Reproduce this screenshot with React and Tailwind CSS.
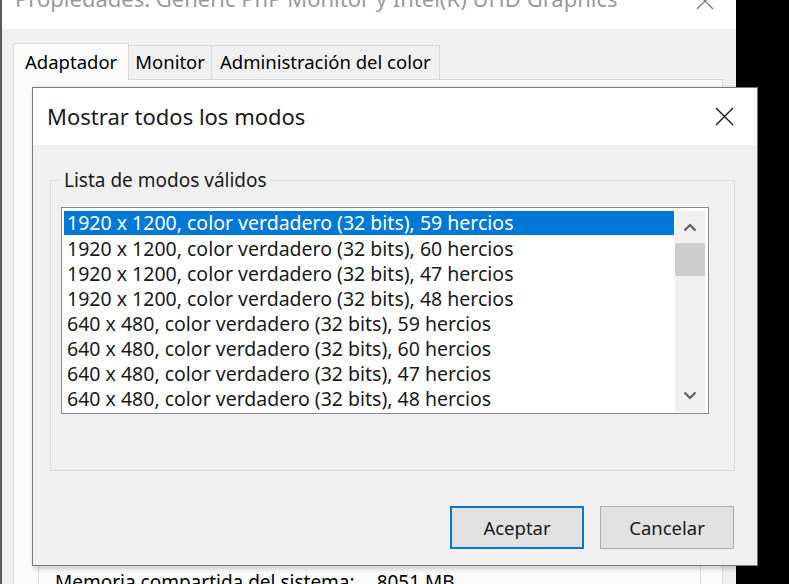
import React from "react";

const rows = [
  "1920 x 1200, color verdadero (32 bits), 59 hercios",
  "1920 x 1200, color verdadero (32 bits), 60 hercios",
  "1920 x 1200, color verdadero (32 bits), 47 hercios",
  "1920 x 1200, color verdadero (32 bits), 48 hercios",
  "640 x 480, color verdadero (32 bits), 59 hercios",
  "640 x 480, color verdadero (32 bits), 60 hercios",
  "640 x 480, color verdadero (32 bits), 47 hercios",
  "640 x 480, color verdadero (32 bits), 48 hercios",
];

function CloseX({ size = 19, color = "#1a1a1a" }) {
  return (
    <svg width={size} height={size} viewBox="0 0 19 19" fill="none">
      <path d="M1 1 L18 18 M18 1 L1 18" stroke={color} strokeWidth="1.4" />
    </svg>
  );
}

function Chevron({ up }) {
  return (
    <svg width="14" height="9" viewBox="0 0 14 9" fill="none">
      <path
        d={up ? "M1.5 7.5 L7 2 L12.5 7.5" : "M1.5 1.5 L7 7 L12.5 1.5"}
        stroke="#606060"
        strokeWidth="2.2"
      />
    </svg>
  );
}

export default function App() {
  return (
    <div
      className="w-[789px] h-[584px] bg-black overflow-hidden relative text-[#000]"
      style={{ fontFamily: '"Noto Sans", "Open Sans", sans-serif' }}
    >
      {/* background property window */}
      <div className="w-[736px] h-full bg-[#f0f0f0] border-l-[2px] border-[#5a5a5a] flex flex-col overflow-hidden">
        <div className="h-[29px] shrink-0 bg-white flex items-start justify-between pl-[13px] pr-[22px] overflow-hidden">
          <div className="text-[22px] leading-[22px] mt-[-13px] text-[#9a9a9a] whitespace-nowrap">
            Propiedades: Generic PnP Monitor y Intel(R) UHD Graphics
          </div>
          <div className="mt-[-8px]">
            <CloseX size={18} color="#7a7a7a" />
          </div>
        </div>
        <div className="flex-1 min-h-0 flex flex-col pl-[11px] pr-[13px] pt-[14px]">
          <div className="shrink-0 flex items-end h-[36px] text-[18.5px] leading-none">
            <div className="h-[37px] mb-[-1px] px-[11px] flex items-center bg-[#fbfbfb] border border-b-0 border-[#d9d9d9] relative z-10">
              Adaptador
            </div>
            <div className="h-[34px] px-[6px] flex items-center border border-l-0 border-b-0 border-[#d9d9d9]">
              Monitor
            </div>
            <div className="h-[34px] px-[8px] flex items-center border border-l-0 border-b-0 border-[#d9d9d9]">
              Administración del color
            </div>
          </div>
          <div className="shrink-0 h-[600px] bg-[#fbfbfb] border border-[#d9d9d9] pl-[24px] pr-[21px] pt-[180px]">
            <div className="h-full border border-[#dcdcdc] pt-[310px] pl-[16px] text-[19px] leading-[22px] whitespace-nowrap">
              Memoria compartida del sistema:<span className="ml-[22px]">8051 MB</span>
            </div>
          </div>
        </div>
      </div>

      {/* modal dialog */}
      <div className="absolute left-[32px] top-[87px] w-[726px] h-[479px] border border-[#7a7a7a] flex flex-col bg-[#f0f0f0] shadow-[2px_2px_6px_rgba(0,0,0,0.25)]">
        <div className="h-[57px] shrink-0 bg-white flex items-center justify-between pl-[14px] pr-[23px]">
          <div className="text-[22px] text-[#1a1a1a]">Mostrar todos los modos</div>
          <CloseX />
        </div>
        <div className="flex-1 flex flex-col">
          <div className="relative mt-[35px] ml-[17px] mr-[22px] h-[291px] border border-[#dcdcdc]">
            <div className="absolute left-[9px] top-[-14px] px-[4px] bg-[#f0f0f0] text-[19px] leading-[26px] text-[#1a1a1a]">
              Lista de modos válidos
            </div>
            <div className="mt-[26px] ml-[10px] mr-[25px] h-[207px] border border-[#828790] bg-white flex pt-[3px] pb-[1px] pl-[2px] pr-[1px]">
              <div className="flex-1 flex flex-col text-[19.5px] leading-[25px] whitespace-nowrap overflow-hidden">
                {rows.map((r, i) => (
                  <div
                    key={i}
                    className={
                      i === 0
                        ? "h-[24px] mb-[1px] leading-[24px] pl-[3px] bg-[#0078d7] text-white"
                        : "h-[25px] pl-[3px] text-[#1a1a1a]"
                    }
                  >
                    {r}
                  </div>
                ))}
              </div>
              <div className="w-[30px] ml-[1px] mr-[2px] bg-[#f0f0f0] flex flex-col">
                <div className="h-[32px] flex items-center justify-center">
                  <Chevron up />
                </div>
                <div className="h-[33px] bg-[#cdcdcd]" />
                <div className="flex-1" />
                <div className="h-[34px] flex items-center justify-center">
                  <Chevron />
                </div>
              </div>
            </div>
          </div>
          <div className="mt-auto mb-[16px] mr-[23px] flex justify-end gap-[16px] text-[18.5px]">
            <button className="w-[134px] h-[43px] bg-[#e1e1e1] border-2 border-[#0078d7] text-[#1a1a1a]">
              Aceptar
            </button>
            <button className="w-[134px] h-[43px] bg-[#e1e1e1] border border-[#adadad] text-[#1a1a1a]">
              Cancelar
            </button>
          </div>
        </div>
      </div>
    </div>
  );
}
